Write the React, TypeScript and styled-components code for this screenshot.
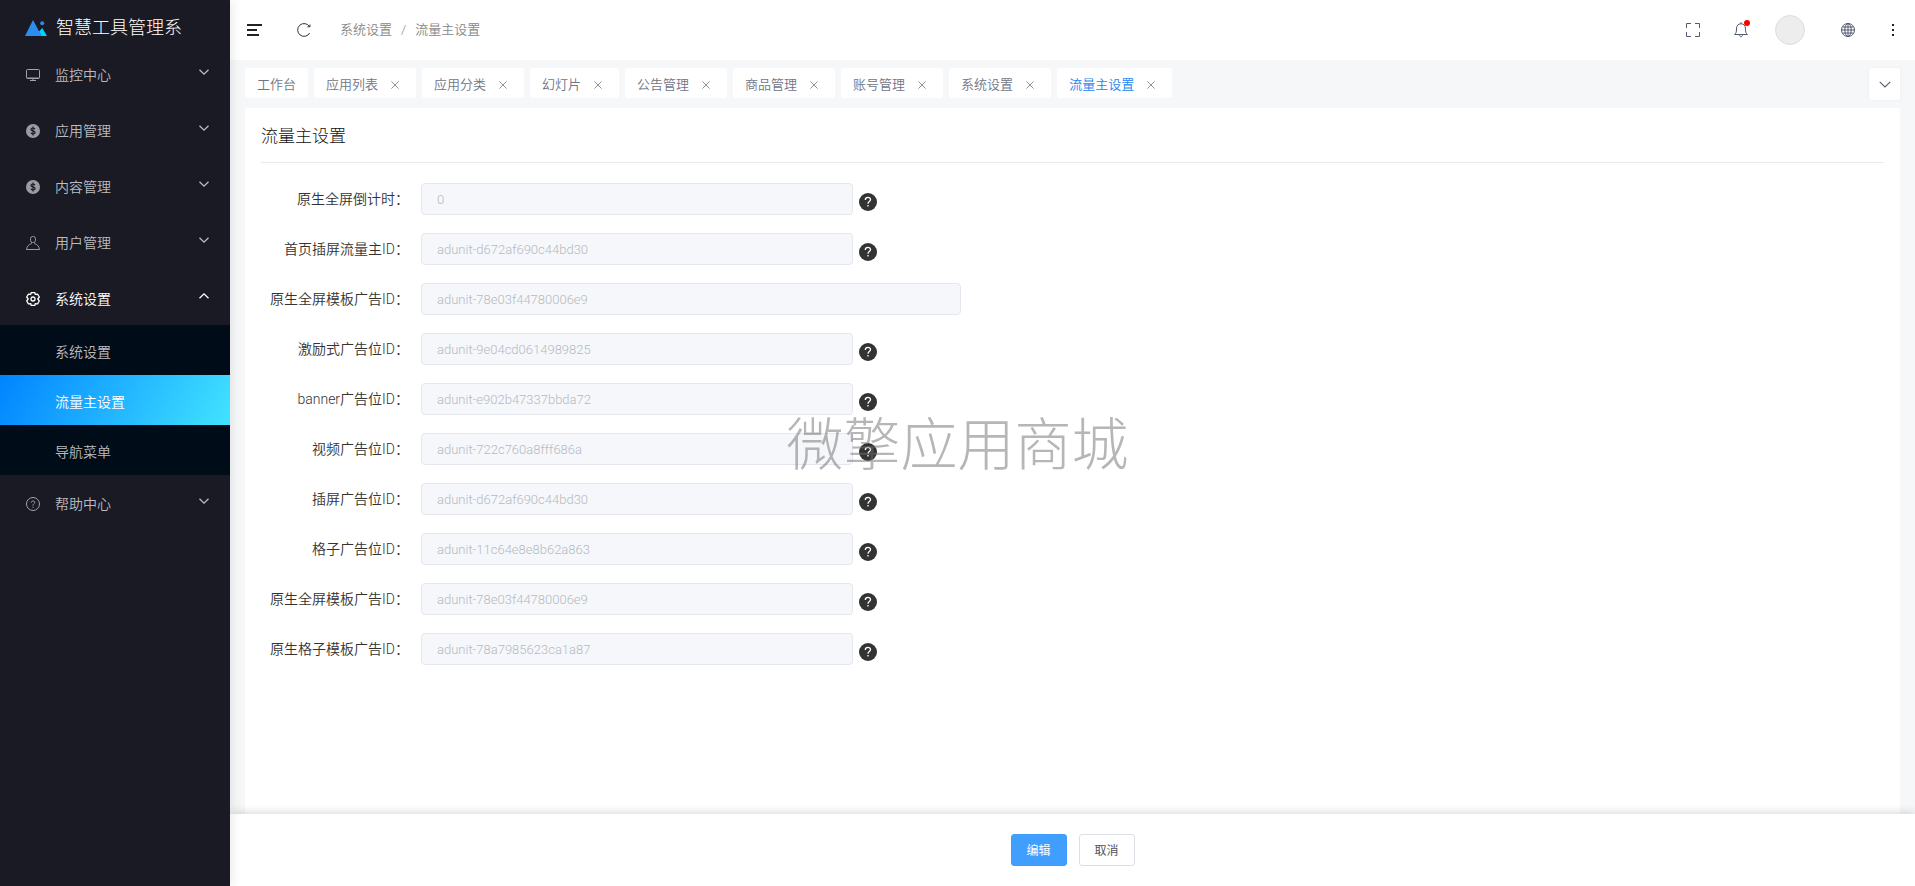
import React from 'react';
import styled, { createGlobalStyle } from 'styled-components';

const GlobalStyle = createGlobalStyle`
  * { box-sizing: border-box; }
  body {
    margin: 0;
    background: #f5f7f9;
    color: #333;
    font-family: Roboto, "Noto Sans CJK SC", sans-serif;
    font-size: 14px;
    font-weight: 350;
  }
  button, input { font: inherit; }
  a { color: inherit; text-decoration: none; }
  svg { display: block; flex: none; }
`;

const Shell = styled.div`
  display: flex;
  min-height: 100vh;
`;

const Sidebar = styled.aside`
  z-index: 2;
  flex: none;
  width: 230px;
  background: #191a23;
  box-shadow: 0 0 12px rgba(0, 0, 0, 0.12);
`;

const Brand = styled.div`
  display: flex;
  align-items: center;
  gap: 9px;
  height: 47px;
  padding: 8px 0 0 25px;
  color: #fff;
  font-size: 18px;
  font-weight: 300;
  line-height: 28px;
  white-space: nowrap;
`;

const MenuItem = styled.button<{ $open?: boolean }>`
  display: flex;
  align-items: center;
  width: 100%;
  height: 56px;
  padding: 0 21px 0 26px;
  border: 0;
  background: none;
  color: ${(p) => (p.$open ? '#fff' : '#bcbcc0')};
  text-align: left;
  cursor: pointer;

  span { flex: 1; padding: 0 0 2px 15px; }
  .arrow { margin-bottom: 6px; }
`;

const SubMenu = styled.div`
  margin: -2px 0 1px;
  background: #000c17;
`;

const SubLink = styled.a<{ $active?: boolean }>`
  display: block;
  height: 50px;
  padding: 2px 0 0 55px;
  line-height: 50px;
  color: ${(p) => (p.$active ? '#fff' : '#bcbcc0')};
  background: ${(p) => (p.$active ? 'linear-gradient(118deg, #0084ff, #42e3ff)' : 'none')};
`;

const Main = styled.div`
  display: flex;
  flex: 1;
  flex-direction: column;
  min-width: 0;
`;

const Header = styled.header`
  display: flex;
  align-items: center;
  justify-content: space-between;
  height: 60px;
  padding: 0 14px 0 16px;
  background: #fff;
`;

const HeaderGroup = styled.div`
  display: flex;
  align-items: center;
`;

const IconButton = styled.button<{ $gap?: number }>`
  position: relative;
  display: flex;
  align-items: center;
  justify-content: center;
  width: 16px;
  height: 32px;
  margin-left: ${(p) => p.$gap ?? 0}px;
  padding: 0;
  border: 0;
  background: none;
  color: #515a6e;
  cursor: pointer;
`;

const Dot = styled.i`
  position: absolute;
  top: 6px;
  right: -1px;
  width: 6px;
  height: 6px;
  border-radius: 50%;
  background: #f00;
`;

const Avatar = styled.div`
  width: 30px;
  height: 30px;
  margin-left: 26px;
  border: 1px solid #ddd;
  border-radius: 50%;
  background: #ededed;
`;

const Crumbs = styled.nav`
  display: flex;
  gap: 9px;
  margin-left: 28px;
  color: #888;
  font-size: 13px;
  line-height: 20px;
  white-space: nowrap;
`;

const TabBar = styled.div`
  display: flex;
  justify-content: space-between;
  height: 48px;
  padding: 8px 15px 0;
`;

const TabList = styled.div`
  display: flex;
  gap: 6px;
`;

const Tab = styled.div<{ $active?: boolean }>`
  display: flex;
  align-items: center;
  height: 30px;
  padding: 4px 12px 0;
  border-radius: 3px;
  background: #fff;
  color: #6f7586;
  font-size: 13px;
  line-height: 20px;
  white-space: nowrap;

  a { color: ${(p) => (p.$active ? '#1c84f0' : 'inherit')}; }
`;

const CloseButton = styled.button`
  display: flex;
  align-items: center;
  justify-content: center;
  width: 16px;
  height: 16px;
  margin: 0 1px 0 9px;
  padding: 0;
  border: 0;
  background: none;
  color: #808695;
  cursor: pointer;
`;

const TabMore = styled.button`
  display: flex;
  align-items: center;
  justify-content: center;
  width: 31px;
  height: 32px;
  padding: 0;
  border: 0;
  border-radius: 3px;
  background: #fff;
  box-shadow: 0 0 4px rgba(0, 0, 0, 0.04);
  color: #515a6e;
  cursor: pointer;
`;

const Panel = styled.main`
  flex: 1;
  margin: 0 15px;
  padding: 0 16px 32px;
  border-radius: 3px 3px 0 0;
  background: #fff;
`;

const Title = styled.h1`
  height: 55px;
  margin: 0 0 20px;
  padding-top: 14px;
  border-bottom: 1px solid #e8eaec;
  color: #111;
  font-size: 17px;
  font-weight: 300;
  line-height: 28px;
`;

const Field = styled.div`
  display: flex;
  align-items: center;
  height: 32px;
  margin-bottom: 18px;
`;

const FieldLabel = styled.label`
  flex: none;
  width: 160px;
  padding: 0 12px 2px 0;
  text-align: right;
  white-space: nowrap;
`;

const FieldInput = styled.input<{ $wide?: boolean }>`
  width: ${(p) => (p.$wide ? 540 : 432)}px;
  min-width: 0;
  height: 32px;
  padding: 0 15px;
  border: 1px solid #e4e7ed;
  border-radius: 4px;
  background: #f5f7fa;
  color: #b6bac3;
  font-size: 13px;
`;

const Help = styled.button`
  display: flex;
  margin: 6px 0 0 6px;
  padding: 0;
  border: 0;
  background: none;
  cursor: pointer;
`;

const Footer = styled.footer`
  position: sticky;
  bottom: 0;
  display: flex;
  justify-content: center;
  gap: 12px;
  height: 72px;
  padding-top: 20px;
  background: #fff;
  box-shadow: 0 0 10px rgba(0, 0, 0, 0.2);
`;

const Action = styled.button<{ $primary?: boolean }>`
  width: 56px;
  height: 32px;
  padding: 0 0 2px;
  border: 1px solid ${(p) => (p.$primary ? '#409eff' : '#dcdfe6')};
  border-radius: 3px;
  background: ${(p) => (p.$primary ? '#409eff' : '#fff')};
  color: ${(p) => (p.$primary ? '#fff' : '#505256')};
  font-size: 12px;
  font-weight: 400;
  cursor: pointer;
`;

const Watermark = styled.div`
  position: fixed;
  inset: 0;
  z-index: 5;
  display: flex;
  align-items: center;
  justify-content: center;
  padding-bottom: 6px;
  color: rgba(110, 110, 110, 0.5);
  font-family: "Noto Sans CJK SC", sans-serif;
  font-size: 57px;
  font-weight: 300;
  pointer-events: none;
`;

const Chevron = ({ up, size = 10 }: { up?: boolean; size?: number }) => (
  <svg className="arrow" width={size} height={size / 2 + 1} viewBox="0 0 10 6" fill="none" stroke="currentColor" strokeWidth={size > 10 ? 0.9 : 1.3}>
    <path d={up ? 'M.5 5.2 5 .9l4.500 4.300' : 'M.5.8 5 5.100 9.500.8'} />
  </svg>
);

const Logo = () => (
  <svg width="22" height="18" viewBox="0 0 22 18">
    <path d="M8 1l8.500 16H0z" fill="#2d8cf0" />
    <path d="M17.300 9 22 17h-5.500l-2.500-4.500z" fill="#00d1ff" />
    <circle cx="17.200" cy="4.300" r="2" fill="#2d8cf0" />
  </svg>
);

const MonitorIcon = () => (
  <svg width="14" height="14" viewBox="0 0 14 14" fill="none" stroke="currentColor" opacity=".85">
    <rect x=".5" y="1.500" width="13" height="9" rx="1" />
    <path d="M1 10h12M7 10v2.500M4 12.500h6" />
  </svg>
);

const CoinIcon = () => (
  <svg width="14" height="14" viewBox="0 0 14 14">
    <circle cx="7" cy="7" r="7" fill="currentColor" opacity=".8" />
    <path d="M9 5.200C8.700 3.500 5 3.600 5 5.400c0 1.900 4.100 1.200 4.100 3.100S5.300 10.500 5 8.700M7 2.500v9" fill="none" stroke="#191a23" strokeWidth="1.200" />
  </svg>
);

const UserIcon = () => (
  <svg width="14" height="14" viewBox="0 0 14 14" fill="none" stroke="currentColor" opacity=".8">
    <rect x="4.500" y=".5" width="5" height="6" rx="2.200" />
    <path d="M5.500 6.500v1C2.500 8.700.8 10.500.5 13.500h13c-.3-3-2-4.800-5-6v-1" />
  </svg>
);

const GearIcon = () => (
  <svg width="14" height="14" viewBox="0 0 14 14" fill="none" stroke="currentColor" strokeWidth="1.300">
    <path d="M5.200.7h3.600l.5 1.700 2.300-.3 1.700 2.900-1.500 2 1.500 2-1.700 2.900-2.300-.3-.5 1.700H5.200l-.5-1.700-2.300.3L.7 9l1.500-2L.7 5l1.700-2.900 2.300.3z" />
    <circle cx="7" cy="7" r="2" />
  </svg>
);

const QuestionIcon = () => (
  <svg width="14" height="14" viewBox="0 0 14 14" fill="none" stroke="currentColor" opacity=".85">
    <circle cx="7" cy="7" r="6.500" />
    <path d="M5.200 5.600C5.300 3.400 9 3.500 8.800 5.500 8.700 6.700 7 6.800 7 8.500M7 9.700v1.200" />
  </svg>
);

const HelpIcon = () => (
  <svg width="18" height="18" viewBox="0 0 18 18">
    <circle cx="9" cy="9" r="9" fill="#333" />
    <path d="M6.300 6.900C6.400 3.400 11.700 3.500 11.500 6.800 11.400 8.500 9 8.500 9 10.700M9 12v1.500" fill="none" stroke="#fff" strokeWidth="1.300" />
  </svg>
);

const FoldIcon = () => (
  <svg width="16" height="14" viewBox="0 0 16 14" fill="none" stroke="#222" strokeWidth="2">
    <path d="M1 2h15M1 7h10M1 12h12" />
  </svg>
);

const RefreshIcon = () => (
  <svg width="14" height="14" viewBox="0 0 14 14" fill="none" stroke="#333">
    <path d="M12.700 10A6.400 6.400 0 1 1 12.500 3.600M13 1.500v2.300h-2.500" />
  </svg>
);

const FullscreenIcon = () => (
  <svg width="14" height="14" viewBox="0 0 14 14" fill="none" stroke="currentColor">
    <path d="M.5 5V.5H5M9 .5h4.500V5M13.500 9v4.500H9M5 13.500H.5V9" />
  </svg>
);

const BellIcon = () => (
  <svg width="14" height="16" viewBox="0 0 14 16" fill="none" stroke="currentColor">
    <path d="M.5 12.500h13c-1.500-1-2-2.500-2-5.500C11.500 3.500 9.800 1.800 7 1.800S2.500 3.500 2.500 7c0 3-.5 4.500-2 5.500zM5.500 13c.2 2.300 2.800 2.300 3 0M7 .2v1.600" />
  </svg>
);

const GlobeIcon = () => (
  <svg width="14" height="14" viewBox="0 0 14 14" fill="none" stroke="currentColor">
    <circle cx="7" cy="7" r="6.500" />
    <ellipse cx="7" cy="7" rx="3.200" ry="6.500" />
    <path d="M7 .5v13M.5 7h13M1.500 4h11M1.500 10h11" />
  </svg>
);

const MoreIcon = () => (
  <svg width="2" height="12" viewBox="0 0 2 12" fill="#222">
    <path d="M0 0h2v2H0zM0 5h2v2H0zM0 10h2v2H0z" />
  </svg>
);

const CloseIcon = () => (
  <svg width="8" height="8" viewBox="0 0 8 8" stroke="currentColor" strokeWidth=".9">
    <path d="M.4.4l7.200 7.200M7.600.4.4 7.600" />
  </svg>
);

const menu = [
  { label: '监控中心', icon: <MonitorIcon /> },
  { label: '应用管理', icon: <CoinIcon /> },
  { label: '内容管理', icon: <CoinIcon /> },
  { label: '用户管理', icon: <UserIcon /> },
  { label: '系统设置', icon: <GearIcon />, children: ['系统设置', '流量主设置', '导航菜单'] },
  { label: '帮助中心', icon: <QuestionIcon /> },
];

const tabs = ['工作台', '应用列表', '应用分类', '幻灯片', '公告管理', '商品管理', '账号管理', '系统设置', '流量主设置'];

const fields = [
  { label: '原生全屏倒计时：', value: '0' },
  { label: '首页插屏流量主ID：', value: 'adunit-d672af690c44bd30' },
  { label: '原生全屏模板广告ID：', value: 'adunit-78e03f44780006e9', wide: true },
  { label: '激励式广告位ID：', value: 'adunit-9e04cd0614989825' },
  { label: 'banner广告位ID：', value: 'adunit-e902b47337bbda72' },
  { label: '视频广告位ID：', value: 'adunit-722c760a8fff686a' },
  { label: '插屏广告位ID：', value: 'adunit-d672af690c44bd30' },
  { label: '格子广告位ID：', value: 'adunit-11c64e8e8b62a863' },
  { label: '原生全屏模板广告ID：', value: 'adunit-78e03f44780006e9' },
  { label: '原生格子模板广告ID：', value: 'adunit-78a7985623ca1a87' },
];

export default function App() {
  return (
    <Shell lang="zh-CN">
      <GlobalStyle />
      <Sidebar>
        <Brand>
          <Logo />
          智慧工具管理系
        </Brand>
        <nav>
          {menu.map((item) => (
            <React.Fragment key={item.label}>
              <MenuItem type="button" $open={!!item.children} aria-expanded={!!item.children}>
                {item.icon}
                <span>{item.label}</span>
                <Chevron up={!!item.children} />
              </MenuItem>
              {item.children && (
                <SubMenu>
                  {item.children.map((child) => (
                    <SubLink key={child} href="#" $active={child === '流量主设置'}>
                      {child}
                    </SubLink>
                  ))}
                </SubMenu>
              )}
            </React.Fragment>
          ))}
        </nav>
      </Sidebar>
      <Main>
        <Header>
          <HeaderGroup>
            <IconButton type="button" aria-label="折叠"><FoldIcon /></IconButton>
            <IconButton type="button" aria-label="刷新" $gap={34}><RefreshIcon /></IconButton>
            <Crumbs>
              <a href="#">系统设置</a>
              <span>/</span>
              <a href="#">流量主设置</a>
            </Crumbs>
          </HeaderGroup>
          <HeaderGroup>
            <IconButton type="button" aria-label="全屏"><FullscreenIcon /></IconButton>
            <IconButton type="button" aria-label="通知" $gap={32}><BellIcon /><Dot /></IconButton>
            <Avatar />
            <IconButton type="button" aria-label="语言" $gap={35}><GlobeIcon /></IconButton>
            <IconButton type="button" aria-label="更多" $gap={29}><MoreIcon /></IconButton>
          </HeaderGroup>
        </Header>
        <TabBar>
          <TabList>
            {tabs.map((tab, i) => (
              <Tab key={tab} $active={i === tabs.length - 1}>
                <a href="#">{tab}</a>
                {i > 0 && <CloseButton type="button" aria-label="关闭"><CloseIcon /></CloseButton>}
              </Tab>
            ))}
          </TabList>
          <TabMore type="button" aria-label="更多标签"><Chevron size={12} /></TabMore>
        </TabBar>
        <Panel>
          <Title>流量主设置</Title>
          <form>
            {fields.map((field, i) => (
              <Field key={i}>
                <FieldLabel htmlFor={`field-${i}`}>{field.label}</FieldLabel>
                <FieldInput id={`field-${i}`} $wide={field.wide} defaultValue={field.value} disabled />
                {!field.wide && <Help type="button" aria-label="帮助"><HelpIcon /></Help>}
              </Field>
            ))}
          </form>
        </Panel>
        <Footer>
          <Action type="button" $primary>编辑</Action>
          <Action type="button">取消</Action>
        </Footer>
      </Main>
      <Watermark>微擎应用商城</Watermark>
    </Shell>
  );
}
